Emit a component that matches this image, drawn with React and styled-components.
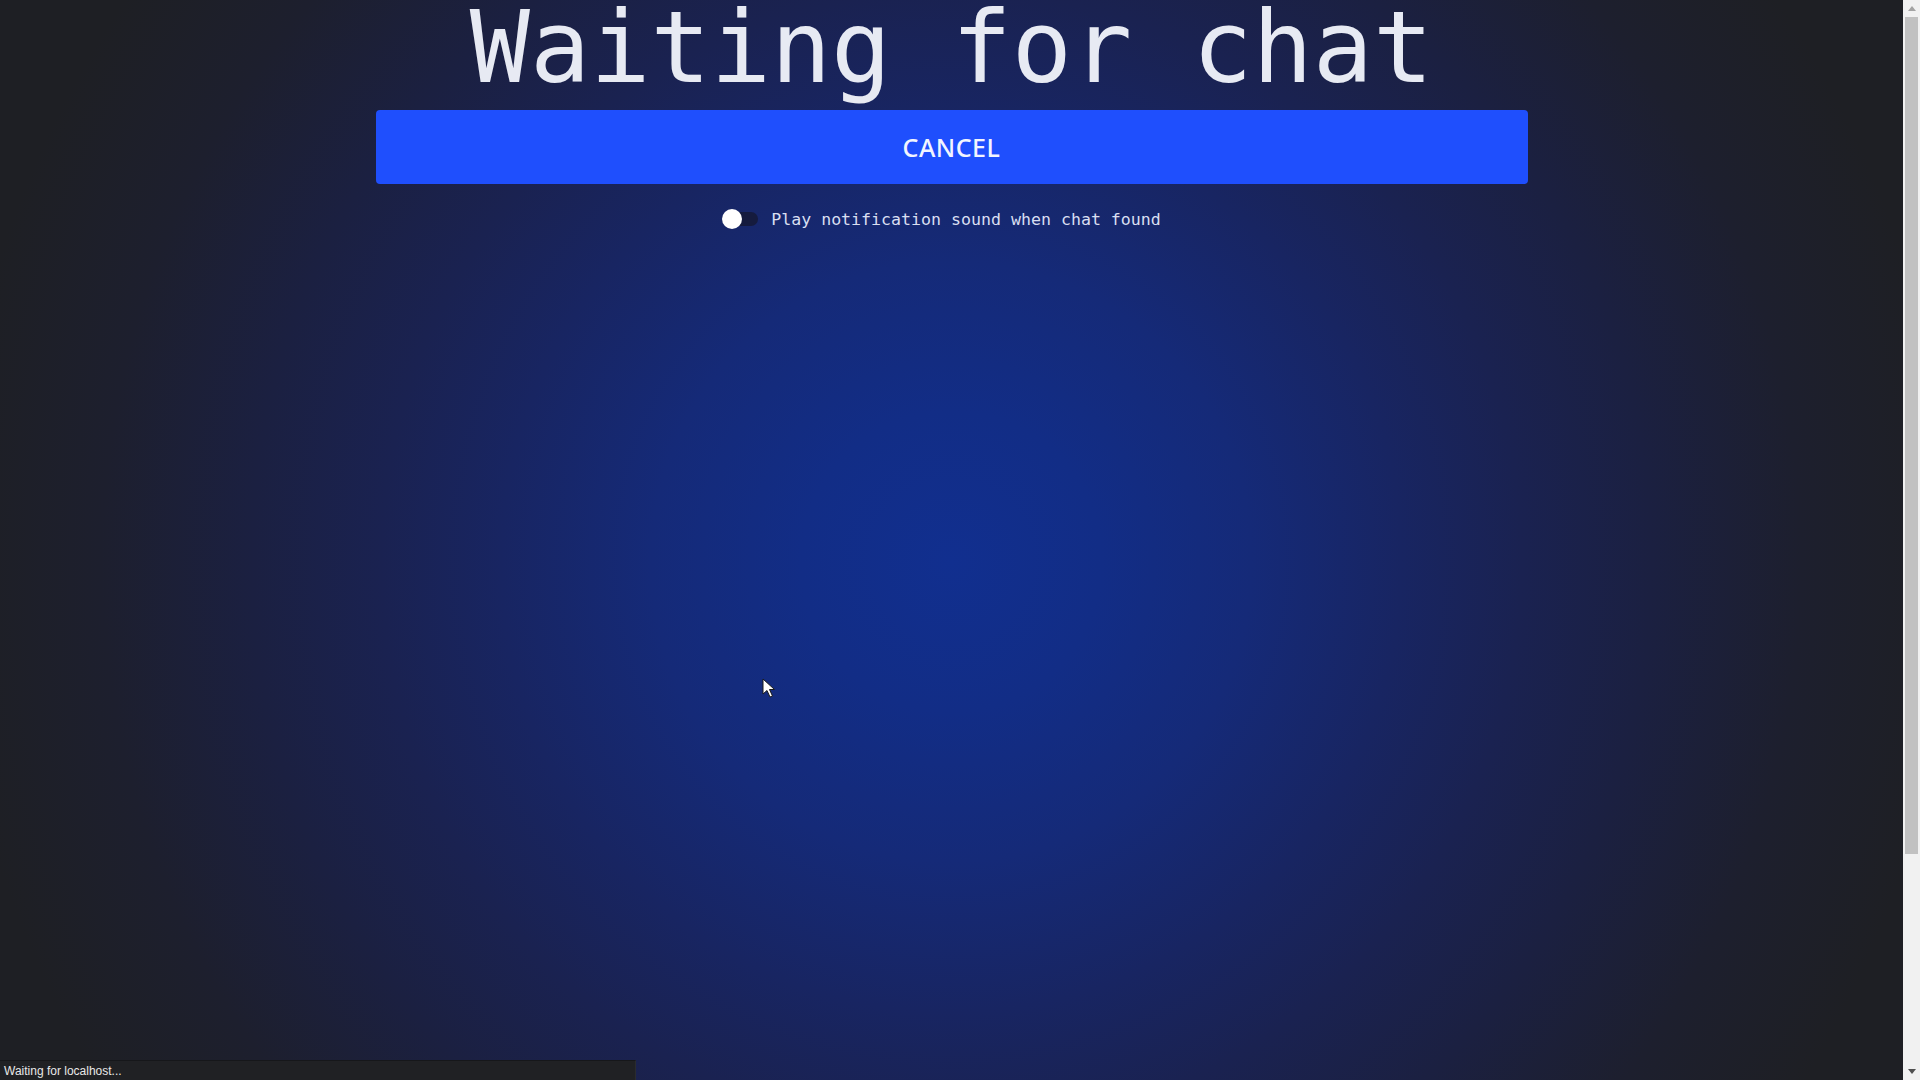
import React, { useState } from 'react'
import styled, { createGlobalStyle } from 'styled-components'

const GlobalStyle = createGlobalStyle`
  html, body {
    margin: 0;
    padding: 0;
    height: 100%;
    overflow: hidden;
    background: #1e1f24;
  }
  #root {
    height: 100%;
  }
`

const Page = styled.div`
  display: flex;
  height: 100vh;
  width: 100vw;
`

const Main = styled.main`
  position: relative;
  flex: 1;
  display: flex;
  flex-direction: column;
  align-items: center;
  background: radial-gradient(
    circle 1000px at 50% 52%,
    #112f8f 0%,
    #122d86 15%,
    #152a78 30%,
    #182562 45%,
    #1a2251 57%,
    #1b2041 70%,
    #1d1f2e 85%,
    #1e1f24 100%
  );
`

const Title = styled.h1`
  margin: 0;
  padding-top: 4px;
  font-family: 'DejaVu Sans Mono', 'Liberation Mono', monospace;
  font-weight: 400;
  font-size: 100px;
  line-height: 87px;
  height: 91px;
  overflow: visible;
  color: #e7eaf3;
  white-space: nowrap;
`

const CancelButton = styled.button`
  margin-top: 15px;
  width: 1152px;
  height: 74px;
  border: 0;
  border-radius: 4px;
  background-color: #1f4ffd;
  color: #f2f5ff;
  font-family: 'Noto Sans', 'Open Sans', sans-serif;
  font-weight: 500;
  font-size: 25px;
  letter-spacing: 0.5px;
  cursor: pointer;
`

const Option = styled.label`
  margin-top: 23px;
  margin-right: 20px;
  display: flex;
  align-items: center;
  gap: 13px;
  height: 24px;
  cursor: pointer;
`

const Track = styled.span`
  position: relative;
  display: block;
  width: 36px;
  height: 14px;
  border-radius: 7px;
  background-color: ${p => (p.$on ? '#3a63ff' : '#151b3e')};
`

const Knob = styled.span`
  position: absolute;
  top: -3px;
  left: ${p => (p.$on ? '16px' : '0')};
  width: 20px;
  height: 20px;
  border-radius: 50%;
  background-color: #ffffff;
  transition: left .2s;
`

const OptionText = styled.span`
  font-family: 'DejaVu Sans Mono', 'Liberation Mono', monospace;
  font-size: 16.6px;
  color: #d9dff1;
  white-space: nowrap;
`

const Pointer = styled.svg`
  position: absolute;
  left: 762px;
  top: 678px;
  width: 14px;
  height: 20px;
`

const Scrollbar = styled.div`
  width: 17px;
  display: flex;
  flex-direction: column;
  background-color: #f1f1f1;
`

const Arrow = styled.div`
  height: 17px;
  display: flex;
  align-items: center;
  justify-content: center;
  color: #a3a3a3;
  font-size: 0;

  svg {
    width: 8px;
    height: 5px;
  }
`

const ThumbArea = styled.div`
  flex: 1;
  padding: 0 2px;
`

const Thumb = styled.div`
  height: 80%;
  background-color: #c1c1c1;
`

const StatusBubble = styled.div`
  position: absolute;
  left: 0;
  bottom: 0;
  width: 636px;
  height: 20px;
  padding-left: 4px;
  box-sizing: border-box;
  display: flex;
  align-items: center;
  background-color: #202124;
  border-top: 1px solid #16171a;
  border-right: 1px solid #2a2b2e;
  color: #e8e8e8;
  font-family: 'Liberation Sans', 'Noto Sans', sans-serif;
  font-size: 12px;
`

const App = () => {
  const [sound, setSound] = useState(false)

  return (
    <>
      <GlobalStyle />
      <Page>
        <Main>
          <Title>Waiting for chat</Title>
          <CancelButton>CANCEL</CancelButton>
          <Option onClick={() => setSound(!sound)}>
            <Track $on={sound}>
              <Knob $on={sound} />
            </Track>
            <OptionText>Play notification sound when chat found</OptionText>
          </Option>
          <Pointer viewBox="0 0 14 20">
            <path d="M1 1 L1 16 L5 12.5 L8 19 L10.5 18 L7.5 11.5 L12.5 11.5 Z" fill="#ffffff" stroke="#1a1a1a" strokeWidth="1" />
          </Pointer>
          <StatusBubble>Waiting for localhost...</StatusBubble>
        </Main>
        <Scrollbar>
          <Arrow>
            <svg viewBox="0 0 8 5"><path d="M0 5 L4 0 L8 5 Z" fill="currentColor" /></svg>
          </Arrow>
          <ThumbArea>
            <Thumb />
          </ThumbArea>
          <Arrow>
            <svg viewBox="0 0 8 5"><path d="M0 0 L8 0 L4 5 Z" fill="#505050" /></svg>
          </Arrow>
        </Scrollbar>
      </Page>
    </>
  )
}

export default App
